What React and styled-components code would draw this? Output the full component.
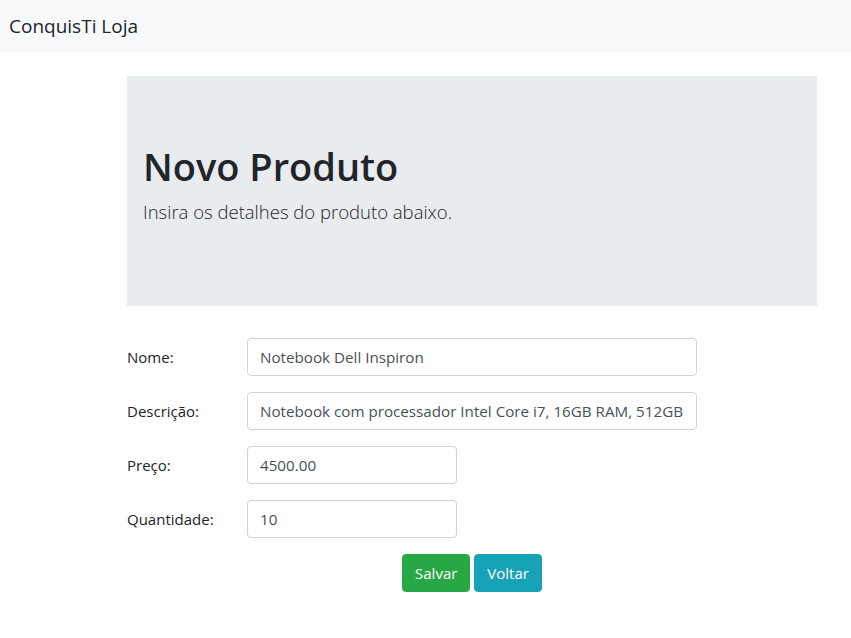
import styled, { createGlobalStyle } from "styled-components";

const GlobalStyle = createGlobalStyle`
	* {
		box-sizing: border-box;
	}
	body {
		margin: 0;
		font-family: "Open Sans", "Noto Sans", sans-serif;
		color: #212529;
		background: #fff;
	}
`;

const Navbar = styled.nav`
	height: 52px;
	background-color: #f8f9fa;
	display: flex;
	align-items: center;
	padding: 0 9px;
`;

const Brand = styled.span`
	font-size: 19px;
	color: #212529;
`;

const Container = styled.div`
	width: 690px;
	margin: 24px 0 0 127px;
`;

const Jumbotron = styled.div`
	background-color: #e9ecef;
	padding: 66px 16px 64px;
	margin-bottom: 32px;
`;

const Title = styled.h1`
	margin: 0 0 8px;
	font-size: 38px;
	font-weight: 600;
	line-height: 48px;
	color: #212529;
`;

const Lead = styled.p`
	margin: 0 0 16px;
	font-size: 18.5px;
	font-weight: 300;
	line-height: 28px;
`;

const Form = styled.form`
	display: flex;
	flex-direction: column;
	gap: 16px;
`;

const Row = styled.div`
	display: grid;
	grid-template-columns: 120px 1fr;
	align-items: center;
`;

const Label = styled.label`
	font-size: 15px;
	color: #212529;
`;

const Input = styled.input`
	width: ${(props) => props.$width}px;
	height: 38px;
	padding: 6px 12px;
	font-family: inherit;
	font-size: 15.2px;
	color: #495057;
	background: #fff;
	border: 1px solid #ced4da;
	border-radius: 4px;
	outline: none;
`;

const Actions = styled.div`
	display: flex;
	justify-content: center;
	gap: 4px;
`;

const Button = styled.button`
	height: 38px;
	padding: 0 12px;
	font-family: inherit;
	font-size: 15px;
	color: #fff;
	background-color: ${(props) => props.color};
	border: 1px solid ${(props) => props.color};
	border-radius: 4px;
	cursor: pointer;
`;

const fields = [
	{ label: "Nome:", value: "Notebook Dell Inspiron", width: 450 },
	{
		label: "Descrição:",
		value: "Notebook com processador Intel Core i7, 16GB RAM, 512GB",
		width: 450,
	},
	{ label: "Preço:", value: "4500.00", width: 210 },
	{ label: "Quantidade:", value: "10", width: 210 },
];

const App = () => {
	return (
		<>
			<GlobalStyle />
			<Navbar>
				<Brand>ConquisTi Loja</Brand>
			</Navbar>
			<Container>
				<Jumbotron>
					<Title>Novo Produto</Title>
					<Lead>Insira os detalhes do produto abaixo.</Lead>
				</Jumbotron>
				<Form onSubmit={(e) => e.preventDefault()}>
					{fields.map((f) => (
						<Row key={f.label}>
							<Label>{f.label}</Label>
							<Input $width={f.width} defaultValue={f.value} />
						</Row>
					))}
					<Actions>
						<Button type="submit" color="#28a745">
							Salvar
						</Button>
						<Button type="button" color="#17a2b8">
							Voltar
						</Button>
					</Actions>
				</Form>
			</Container>
		</>
	);
};

export default App;
